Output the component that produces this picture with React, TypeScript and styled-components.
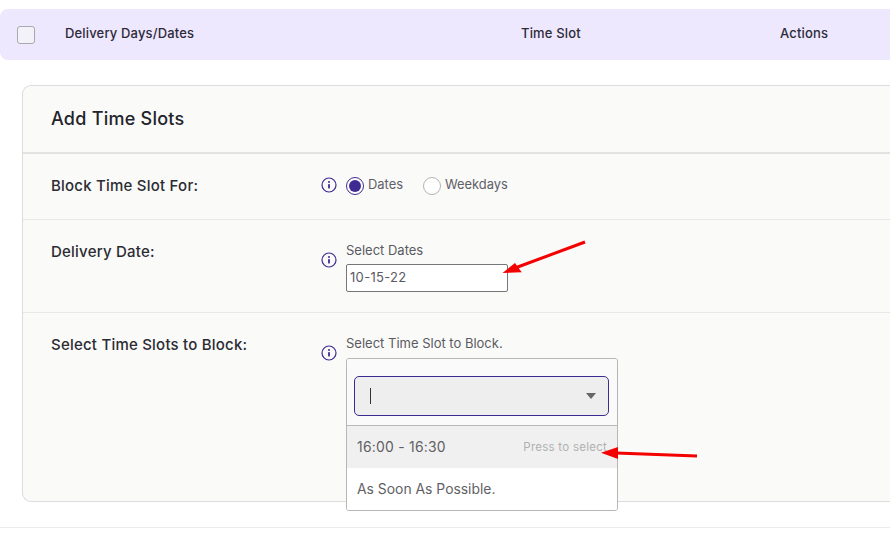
import React from "react";
import styled, { createGlobalStyle } from "styled-components";

const Global = createGlobalStyle`
  html, body { margin: 0; padding: 0; background: #fff; overflow: hidden; }
  body { font-family: Inter, "Liberation Sans", sans-serif; width: 890px; height: 533px; }
`;

const Page = styled.div`
  position: relative;
  width: 890px;
  height: 533px;
  overflow: hidden;
  padding-top: 9px;
  box-sizing: border-box;
`;

const TableHead = styled.div`
  box-sizing: border-box;
  display: grid;
  grid-template-columns: 65px 456px 259px 1fr;
  align-items: center;
  height: 51px;
  padding-bottom: 3px;
  width: 910px;
  background: #ede8fd;
  border-radius: 8px 0 0 8px;
  color: #2d2a3a;
  font-size: 13px;
  font-weight: 500;
  letter-spacing: 0.16px;
`;

const HeadCheck = styled.span`
  display: block;
  box-sizing: border-box;
  width: 18px;
  height: 18px;
  margin-left: 17px;
  margin-top: 4px;
  background: #f4f2f9;
  border: 1px solid #a9a8ae;
  border-radius: 3px;
`;

const Card = styled.section`
  box-sizing: border-box;
  width: 900px;
  height: 417px;
  margin: 25px 0 0 22px;
  background: #fafaf8;
  border: 1px solid #dcdcdc;
  border-right: 0;
  border-radius: 9px 0 0 9px;
`;

const CardTitle = styled.h2`
  box-sizing: border-box;
  height: 68px;
  margin: 0;
  padding: 22px 0 0 28px;
  border-bottom: 2px solid #e2e2e2;
  color: #23232b;
  font-size: 18px;
  line-height: 22px;
  font-weight: 500;
  letter-spacing: 0.25px;
`;

const Row = styled.div<{ $height: number; $last?: boolean }>`
  box-sizing: border-box;
  display: grid;
  grid-template-columns: 270px 25px 1fr;
  height: ${(p) => p.$height}px;
  padding-left: 28px;
  border-bottom: ${(p) => (p.$last ? "0" : "1px solid #e8e8e8")};
`;

const Label = styled.div<{ $top: number }>`
  padding-top: ${(p) => p.$top}px;
  color: #2b2b33;
  font-size: 15px;
  line-height: 17px;
  font-weight: 500;
  letter-spacing: 0.22px;
`;

const InfoSlot = styled.div<{ $top: number }>`
  padding-top: ${(p) => p.$top}px;
  color: #3f2a93;
  line-height: 0;
`;

const Control = styled.div<{ $top: number }>`
  position: relative;
  padding-top: ${(p) => p.$top}px;
`;

const Radios = styled.div`
  display: flex;
  align-items: center;
`;

const RadioMark = styled.span<{ $on?: boolean }>`
  box-sizing: border-box;
  display: flex;
  align-items: center;
  justify-content: center;
  width: 18px;
  height: 18px;
  border-radius: 50%;
  background: #fff;
  border: 1px solid ${(p) => (p.$on ? "#3f2a93" : "#b4b4b4")};
  &::after {
    content: "";
    display: ${(p) => (p.$on ? "block" : "none")};
    width: 12px;
    height: 12px;
    border-radius: 50%;
    background: #3f2a93;
  }
`;

const RadioText = styled.span<{ $gap: number }>`
  margin: -3px ${(p) => p.$gap}px 0 4px;
  color: #606068;
  font-size: 12.9px;
  line-height: 16px;
`;

const FieldLabel = styled.div`
  color: #5a5a62;
  font-size: 13px;
  line-height: 16px;
`;

const DateInput = styled.div`
  box-sizing: border-box;
  width: 162px;
  height: 28px;
  margin-top: 6px;
  padding-left: 3px;
  background: #fff;
  border: 1px solid #77777b;
  border-radius: 2px;
  color: #5a5a62;
  font-size: 13px;
  line-height: 25px;
  letter-spacing: 0.32px;
`;

const Dropdown = styled.div`
  position: absolute;
  left: 0;
  top: 45px;
  box-sizing: border-box;
  width: 272px;
  height: 153px;
  background: #fff;
  border: 1px solid #b6b6b6;
  border-radius: 3px;
  overflow: hidden;
`;

const SearchArea = styled.div`
  box-sizing: border-box;
  height: 67px;
  padding: 17px 8px 0 7px;
  background: #fafafa;
  border-bottom: 1px solid #b8b8b8;
`;

const SearchBox = styled.div`
  box-sizing: border-box;
  display: flex;
  align-items: center;
  justify-content: space-between;
  height: 40px;
  padding: 0 12px 0 15px;
  background: #eeeeee;
  border: 1px solid #3f2a93;
  border-radius: 5px;
`;

const Caret = styled.span`
  display: block;
  width: 1px;
  height: 16px;
  background: #333;
`;

const Arrow = styled.span`
  display: block;
  width: 0;
  height: 0;
  border-left: 5.5px solid transparent;
  border-right: 5.5px solid transparent;
  border-top: 6px solid #666;
`;

const Option = styled.div<{ $active?: boolean }>`
  box-sizing: border-box;
  display: flex;
  align-items: center;
  justify-content: space-between;
  height: 42px;
  padding: 0 10px 1px 10px;
  background: ${(p) => (p.$active ? "#f0f0f0" : "#fff")};
  color: #5f5f65;
  font-size: 13.9px;
`;

const SlotTime = styled.span`
  letter-spacing: 0.25px;
`;

const Hint = styled.span`
  color: #b0b0b0;
  font-size: 11.5px;
  letter-spacing: 0.25px;
`;

const FooterLine = styled.div`
  position: absolute;
  left: 0;
  right: 0;
  top: 527px;
  height: 1px;
  background: #ececec;
`;

const Annotation = styled.svg`
  position: absolute;
  left: 0;
  top: 0;
  pointer-events: none;
`;

const InfoIcon = () => (
  <svg width="16" height="16" viewBox="0 0 16 16" fill="none">
    <circle cx="8" cy="8" r="7" stroke="currentColor" strokeWidth="1.2" />
    <circle cx="8" cy="5.1" r="1" fill="currentColor" />
    <rect x="7.1" y="7" width="1.8" height="4.4" rx="0.4" fill="currentColor" />
  </svg>
);

export default function App() {
  return (
    <Page>
      <Global />
      <TableHead>
        <HeadCheck />
        <span>Delivery Days/Dates</span>
        <span>Time Slot</span>
        <span>Actions</span>
      </TableHead>
      <Card>
        <CardTitle>Add Time Slots</CardTitle>
        <Row $height={66}>
          <Label $top={23}>Block Time Slot For:</Label>
          <InfoSlot $top={23}><InfoIcon /></InfoSlot>
          <Control $top={23}>
            <Radios>
              <RadioMark $on />
              <RadioText $gap={20}>Dates</RadioText>
              <RadioMark />
              <RadioText $gap={0}>Weekdays</RadioText>
            </Radios>
          </Control>
        </Row>
        <Row $height={93}>
          <Label $top={23}>Delivery Date:</Label>
          <InfoSlot $top={32}><InfoIcon /></InfoSlot>
          <Control $top={22}>
            <FieldLabel>Select Dates</FieldLabel>
            <DateInput>10-15-22</DateInput>
          </Control>
        </Row>
        <Row $height={188} $last>
          <Label $top={23}>Select Time Slots to Block:</Label>
          <InfoSlot $top={32}><InfoIcon /></InfoSlot>
          <Control $top={22}>
            <FieldLabel>Select Time Slot to Block.</FieldLabel>
            <Dropdown>
              <SearchArea>
                <SearchBox>
                  <Caret />
                  <Arrow />
                </SearchBox>
              </SearchArea>
              <Option $active>
                <SlotTime>16:00 - 16:30</SlotTime>
                <Hint>Press to select</Hint>
              </Option>
              <Option>As Soon As Possible.</Option>
            </Dropdown>
          </Control>
        </Row>
      </Card>
      <FooterLine />
      <Annotation width="890" height="533" viewBox="0 0 890 533">
        <path d="M585 242 L515 268" stroke="#f40000" strokeWidth="3" />
        <path d="M502.5 273 L515 263 L521.7 272.3 Z" fill="#f40000" />
        <path d="M697 456 L616 453" stroke="#f40000" strokeWidth="3" />
        <path d="M601 452.7 L618 447 L618 459 Z" fill="#f40000" />
      </Annotation>
    </Page>
  );
}
